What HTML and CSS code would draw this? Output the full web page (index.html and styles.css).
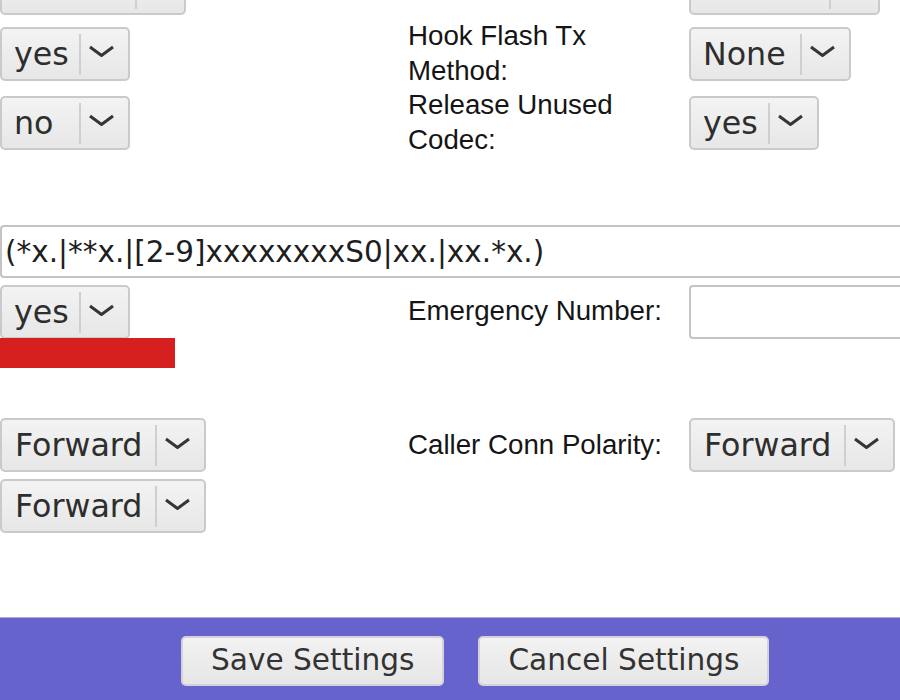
FILE: index.html
```html
<!DOCTYPE html>
<html lang="en">
<head>
<meta charset="utf-8">
<title>Line Settings</title>
<link rel="stylesheet" href="styles.css">
</head>
<body>
<div class="page">
  <main class="form">
    <div class="row row-a">
      <div class="cell"><span class="sel"><span class="val val-a1"></span><span class="sep"></span><svg class="chev" viewBox="0 0 27 12"><polyline points="2,2 13.5,10.5 25,2"/></svg></span></div>
      <div class="cell lbl"></div>
      <div class="cell"><span class="sel"><span class="val val-a2"></span><span class="sep"></span><svg class="chev" viewBox="0 0 27 12"><polyline points="2,2 13.5,10.5 25,2"/></svg></span></div>
    </div>
    <div class="row row-b">
      <div class="cell"><span class="sel"><span class="val">yes</span><span class="sep"></span><svg class="chev" viewBox="0 0 27 12"><polyline points="2,2 13.5,10.5 25,2"/></svg></span></div>
      <div class="cell lbl">Hook Flash Tx Method:</div>
      <div class="cell"><span class="sel"><span class="val val-wide">None</span><span class="sep"></span><svg class="chev" viewBox="0 0 27 12"><polyline points="2,2 13.5,10.5 25,2"/></svg></span></div>
    </div>
    <div class="row row-b">
      <div class="cell"><span class="sel"><span class="val val-yn">no</span><span class="sep"></span><svg class="chev" viewBox="0 0 27 12"><polyline points="2,2 13.5,10.5 25,2"/></svg></span></div>
      <div class="cell lbl">Release Unused Codec:</div>
      <div class="cell"><span class="sel"><span class="val">yes</span><span class="sep"></span><svg class="chev" viewBox="0 0 27 12"><polyline points="2,2 13.5,10.5 25,2"/></svg></span></div>
    </div>
    <div class="row row-d">
      <input class="text dialplan" type="text" value="(*x.|**x.|[2-9]xxxxxxxxS0|xx.|xx.*x.)">
    </div>
    <div class="row row-e">
      <div class="cell stack">
        <span class="sel"><span class="val">yes</span><span class="sep"></span><svg class="chev" viewBox="0 0 27 12"><polyline points="2,2 13.5,10.5 25,2"/></svg></span>
        <div class="alert"></div>
      </div>
      <div class="cell lbl lbl-fix">Emergency Number:</div>
      <div class="cell"><input class="text emerg" type="text" value=""></div>
    </div>
    <div class="row row-f">
      <div class="cell"><span class="sel"><span class="val val-fw">Forward</span><span class="sep"></span><svg class="chev" viewBox="0 0 27 12"><polyline points="2,2 13.5,10.5 25,2"/></svg></span></div>
      <div class="cell lbl">Caller Conn Polarity:</div>
      <div class="cell"><span class="sel"><span class="val val-fw">Forward</span><span class="sep"></span><svg class="chev" viewBox="0 0 27 12"><polyline points="2,2 13.5,10.5 25,2"/></svg></span></div>
    </div>
    <div class="row row-g">
      <div class="cell"><span class="sel"><span class="val val-fw">Forward</span><span class="sep"></span><svg class="chev" viewBox="0 0 27 12"><polyline points="2,2 13.5,10.5 25,2"/></svg></span></div>
      <div class="cell lbl"></div>
      <div class="cell"></div>
    </div>
  </main>
  <footer class="bar">
    <button class="btn" type="button">Save Settings</button>
    <button class="btn" type="button">Cancel Settings</button>
  </footer>
</div>
</body>
</html>
```
FILE: styles.css
```css
html, body {
  margin: 0;
  padding: 0;
  overflow: hidden;
  background: #ffffff;
}
body {
  font-family: "Liberation Sans", Arial, sans-serif;
  color: #111;
}
.page {
  display: flex;
  flex-direction: column;
  min-height: 100vh;
  width: 1100px;
}
.form {
  flex: 1;
  display: flex;
  flex-direction: column;
}
.row {
  display: grid;
  grid-template-columns: 408px 281px 400px;
  align-items: center;
}
.row-a { height: 53px; margin-top: -39px; }
.row-b { height: 69px; }
.row-a + .row-b { margin-top: 5px; }
.row-d { margin-top: 68px; height: 53px; display: flex; }
.row-e { margin-top: 7px; align-items: start; }
.row-f { margin-top: 50px; height: 53px; }
.row-g { margin-top: 8px; height: 53px; }

.cell { display: flex; align-items: center; }
.stack { flex-direction: column; align-items: flex-start; }
.lbl {
  font-size: 27.7px;
  line-height: 34.5px;
  padding-right: 8px;
  color: #151515;
}
.lbl-fix { height: 53px; }

.sel {
  display: inline-flex;
  align-items: center;
  box-sizing: border-box;
  height: 54px;
  border: 2px solid #cacaca;
  border-radius: 5px;
  background: linear-gradient(#f3f3f3, #e7e7e7);
  font-family: "DejaVu Sans", sans-serif;
  font-size: 31.7px;
  color: #2e2e2e;
  padding-left: 12px;
}
.val {
  padding-right: 10px;
  white-space: nowrap;
}
.val-a1 { width: 111px; padding-right: 10px; }
.val-a2 { width: 116px; padding-right: 10px; }
.val-wide { padding-right: 14px; }
.val-yn { min-width: 55px; }
.val-fw { padding-left: 1px; padding-right: 13px; }
.sep {
  width: 2px;
  align-self: stretch;
  margin: 5px 0 4px;
  background: #cfcfcf;
}
.chev {
  width: 27px;
  height: 12px;
  margin: 0 13px 5px 7px;
}
.chev polyline {
  fill: none;
  stroke: #353535;
  stroke-width: 3;
}

.text {
  box-sizing: border-box;
  height: 53px;
  margin: 0;
  border: 2px solid #c4c4c4;
  border-radius: 4px;
  background: #fff;
  font-family: "DejaVu Sans", sans-serif;
  font-size: 29.5px;
  color: #1e1e1e;
  padding: 0 3px;
  outline: none;
}
.dialplan { width: 1050px; }
.emerg { width: 320px; height: 54px; }

.alert {
  width: 175px;
  height: 30px;
  margin-top: -1px;
  background: #d61f1f;
}

.bar {
  height: 83px;
  box-sizing: border-box;
  background: #6664cc;
  border-top: 1px solid #a9a8e2;
  display: flex;
  align-items: flex-start;
  gap: 34px;
  padding: 18px 0 0 181px;
}
.btn {
  box-sizing: border-box;
  height: 50px;
  margin: 0;
  padding: 0 28px;
  border: 2px solid #d2d2d8;
  border-radius: 5px;
  background: linear-gradient(#f2f2f2, #e6e6e6);
  font-family: "DejaVu Sans", sans-serif;
  font-size: 29.6px;
  color: #333;
  line-height: 1;
}
```
